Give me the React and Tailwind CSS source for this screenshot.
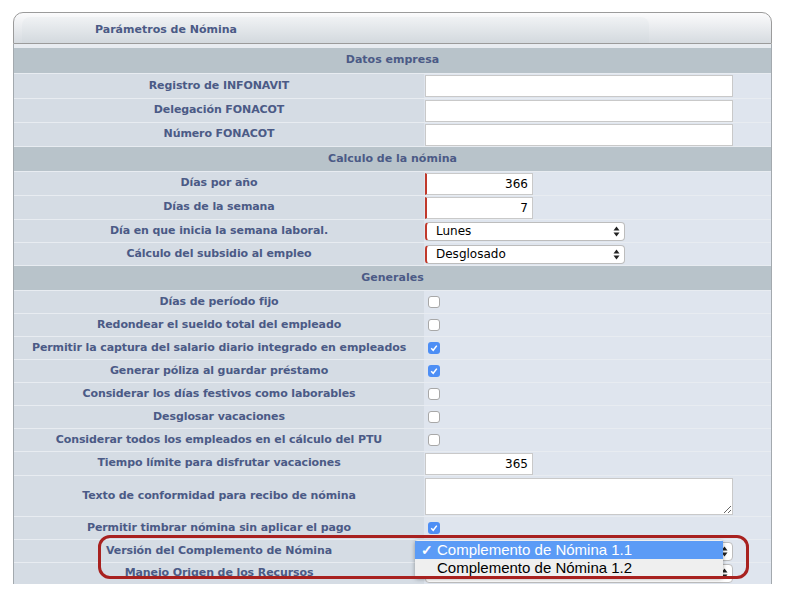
import React from "react";

const font = { fontFamily: '"DejaVu Sans", Verdana, sans-serif' };

const Header = ({ title, h = "h-[25px]" }) => (
  <div className={`${h} border-t border-[#e8ecf1] bg-[#b8c3ca] flex items-center justify-center text-[11px] font-bold text-[#4b5a86]`}>
    {title}
  </div>
);

const Row = ({ label, h = "h-[23px]", children }) => (
  <div className={`${h} border-t border-[#e8ecf1] flex`}>
    <div className="w-[410px] bg-[#d5dce4] flex items-center justify-center text-[11px] font-bold text-[#4b5a86] whitespace-nowrap tracking-[-0.1px]">
      {label}
    </div>
    <div className="flex-1 bg-[#dfe5ee] flex items-center pl-[1px]">{children}</div>
  </div>
);

const TextInput = () => (
  <div className="w-[308px] h-[22px] bg-white border border-[#c9c9c9]" />
);

const NumInput = ({ value, required }) => (
  <div
    className={`w-[108px] h-[22px] bg-white border border-[#c9c9c9] flex items-center justify-end pr-[4px] text-[12px] text-black ${
      required ? "border-l-2 border-l-[#c0392b]" : ""
    }`}
  >
    {value}
  </div>
);

const Arrows = () => (
  <svg width="7" height="11" viewBox="0 0 7 11">
    <path d="M3.5 0.5 L6.5 4.5 H0.5 Z" fill="#222" />
    <path d="M3.5 10.5 L6.5 6.5 H0.5 Z" fill="#222" />
  </svg>
);

const Select = ({ value, w = "w-[200px]", required = true }) => (
  <div
    className={`${w} h-[19px] bg-white border border-[#bdbdbd] rounded-[4px] flex items-center justify-between pl-[9px] pr-[4px] text-[12px] text-black ${
      required ? "border-l-2 border-l-[#c0392b]" : ""
    }`}
  >
    <span>{value}</span>
    <Arrows />
  </div>
);

const Check = ({ checked }) =>
  checked ? (
    <div className="ml-[3px] w-[12px] h-[12px] rounded-[3px] bg-[#4d8ef5] flex items-center justify-center">
      <svg width="8" height="8" viewBox="0 0 8 8">
        <path d="M1.2 4.3 L3.2 6.3 L6.8 1.6" stroke="white" strokeWidth="1.5" fill="none" />
      </svg>
    </div>
  ) : (
    <div className="ml-[3px] w-[12px] h-[12px] rounded-[3px] bg-white border border-[#a8a8a8]" />
  );

export default function App() {
  return (
    <div className="relative w-[788px] h-[595px] bg-white overflow-hidden" style={font}>
      <div className="ml-[13px] mt-[12px] w-[759px]">
        <div className="h-[32px] rounded-t-[10px] border border-[#9b9b9b] bg-gradient-to-b from-[#fbfbfc] to-[#d6dbe0] flex items-end pl-[8px]">
          <div className="w-[627px] h-[26px] rounded-t-[8px] bg-gradient-to-b from-[#f0f2f4] to-[#d3d9de] flex items-center pl-[73px] text-[11px] font-bold text-[#4b5a86]">
            Parámetros de Nómina
          </div>
        </div>
        <div className="border-x border-[#a3a9ae] bg-[#e8ecf1] pt-[3px]">
          <Header title="Datos empresa" h="h-[26px]" />
          <Row label="Registro de INFONAVIT" h="h-[25px]">
            <TextInput />
          </Row>
          <Row label="Delegación FONACOT" h="h-[24px]">
            <TextInput />
          </Row>
          <Row label="Número FONACOT" h="h-[24px]">
            <TextInput />
          </Row>
          <Header title="Calculo de la nómina" />
          <Row label="Días por año" h="h-[24px]">
            <NumInput value="366" required />
          </Row>
          <Row label="Días de la semana" h="h-[24px]">
            <NumInput value="7" required />
          </Row>
          <Row label="Día en que inicia la semana laboral." h="h-[23px]">
            <Select value="Lunes" />
          </Row>
          <Row label="Cálculo del subsidio al empleo" h="h-[23px]">
            <Select value="Desglosado" />
          </Row>
          <Header title="Generales" h="h-[25px]" />
          <Row label="Días de período fijo">
            <Check />
          </Row>
          <Row label="Redondear el sueldo total del empleado">
            <Check />
          </Row>
          <Row label="Permitir la captura del salario diario integrado en empleados">
            <Check checked />
          </Row>
          <Row label="Generar póliza al guardar préstamo">
            <Check checked />
          </Row>
          <Row label="Considerar los días festivos como laborables">
            <Check />
          </Row>
          <Row label="Desglosar vacaciones">
            <Check />
          </Row>
          <Row label="Considerar todos los empleados en el cálculo del PTU">
            <Check />
          </Row>
          <Row label="Tiempo límite para disfrutar vacaciones" h="h-[24px]">
            <NumInput value="365" />
          </Row>
          <Row label="Texto de conformidad para recibo de nómina" h="h-[41px]">
            <textarea
              readOnly
              className="w-[308px] h-[37px] bg-white border border-[#c9c9c9] outline-none"
            />
          </Row>
          <Row label="Permitir timbrar nómina sin aplicar el pago">
            <Check checked />
          </Row>
          <Row label="Versión del Complemento de Nómina">
            <Select value="" w="w-[308px]" required={false} />
          </Row>
          <Row label="Manejo Origen de los Recursos" h="h-[22px]">
            <Select value="" w="w-[308px]" required={false} />
          </Row>
        </div>
      </div>

      {/* open select menu */}
      <div
        className="absolute left-[415px] top-[540px] w-[308px] bg-[#efefef] rounded-[3px] shadow-[0_1px_4px_rgba(0,0,0,0.35)] py-[1px] text-[15px]"
        style={{ fontFamily: '"Liberation Sans", Arial, sans-serif' }}
      >
        <div className="h-[18px] bg-[#5b9bf6] text-white flex items-center">
          <span className="w-[22px] pl-[6px] text-[14px] font-bold">✓</span>
          <span>Complemento de Nómina 1.1</span>
        </div>
        <div className="h-[18px] text-black flex items-center">
          <span className="w-[22px]" />
          <span>Complemento de Nómina 1.2</span>
        </div>
      </div>

      {/* annotation */}
      <div className="absolute left-[98px] top-[535px] w-[651px] h-[44px] border-[3px] border-[#a8211f] rounded-[12px]" />
    </div>
  );
}
